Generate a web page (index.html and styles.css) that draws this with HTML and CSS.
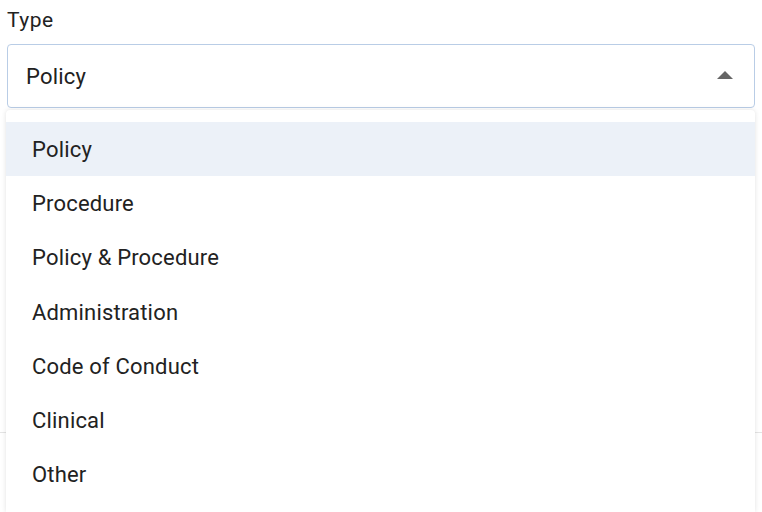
FILE: index.html
```html
<!DOCTYPE html>
<html>
<head>
<meta charset="utf-8">
<link rel="stylesheet" href="styles.css">
</head>
<body>
<div class="field">
  <div class="label">Type</div>
  <div class="select">
    <span class="value">Policy</span>
    <svg class="arrow" width="16" height="8" viewBox="0 0 16 8"><path d="M0 8 L8 0 L16 8 Z" fill="#666"/></svg>
  </div>
  <div class="menu">
    <div class="option active">Policy</div>
    <div class="option">Procedure</div>
    <div class="option">Policy &amp; Procedure</div>
    <div class="option">Administration</div>
    <div class="option">Code of Conduct</div>
    <div class="option">Clinical</div>
    <div class="option">Other</div>
  </div>
</div>
<div class="divider"></div>
</body>
</html>
```
FILE: styles.css
```css
html, body {
  margin: 0;
  padding: 0;
  background: #fff;
  font-family: Roboto, "Liberation Sans", sans-serif;
  color: #212121;
  overflow: hidden;
  height: 512px;
}
.field {
  position: relative;
  padding: 8px 7px 0 7px;
}
.label {
  font-size: 21px;
  letter-spacing: 0.5px;
  line-height: 24px;
  height: 24px;
  margin-bottom: 12px;
  color: #222;
}
.select {
  box-sizing: border-box;
  height: 64px;
  border: 1px solid #b9cde6;
  border-radius: 4px;
  display: flex;
  align-items: center;
  justify-content: space-between;
  padding: 0 21px 0 18px;
}
.value {
  font-size: 22px;
  letter-spacing: 0.18px;
  line-height: 24px;
  margin-top: 1px;
}
.arrow {
  display: block;
  margin-top: -2px;
}
.menu {
  position: absolute;
  top: 110px;
  left: 6px;
  width: 749px;
  background: #fff;
  border-radius: 4px 4px 0 0;
  padding: 12px 0 10px 0;
  box-shadow: 0 0 5px rgba(0,0,0,0.12);
  z-index: 2;
}
.option {
  height: 54.3px;
  display: flex;
  align-items: center;
  padding-left: 26px;
  font-size: 22px;
  letter-spacing: 0.18px;
  color: #222;
}
.option.active {
  background: #ecf1f8;
}
.divider {
  margin-top: 324px;
  border-top: 1px solid #e4e4e4;
}
```
